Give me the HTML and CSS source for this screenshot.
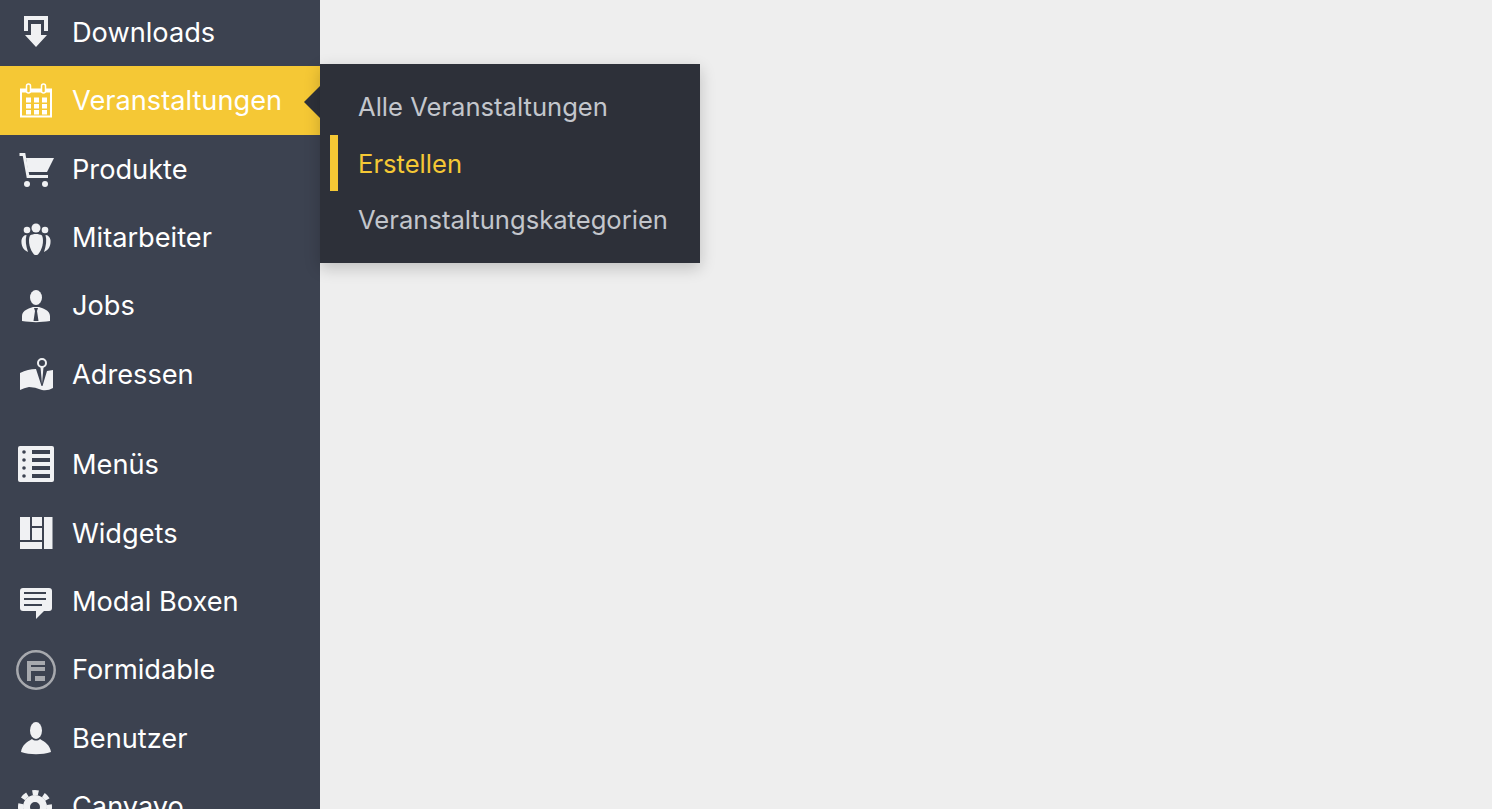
FILE: index.html
```html
<!DOCTYPE html>
<html lang="de">
<head>
    <meta charset="UTF-8">
    <title>Veranstaltungen</title>
    <link rel="stylesheet" href="styles.css">
</head>
<body>
    <ul class="sidebar">
        <li class="item">
            <svg class="icon" viewBox="0 0 36 36"><path d="M6 2h24v15h-4V6H10v11H6z"/><path d="M13 10h10v11h6L18 33 7 21h6z"/></svg>
            <span>Downloads</span>
        </li>
        <li class="item active">
            <svg class="icon" viewBox="0 0 36 36">
                <path fill-rule="evenodd" d="M2 5.500h32v29H2zM4 9.500v23h28v-23z"/>
                <rect x="8" y="14.500" width="5" height="5"/><rect x="16" y="14.500" width="5" height="5"/><rect x="24" y="14.500" width="5" height="5"/>
                <rect x="8" y="21" width="5" height="4.500"/><rect x="16" y="21" width="5" height="4.500"/><rect x="24" y="21" width="5" height="4.500"/>
                <rect x="8" y="27" width="5" height="4.500"/><rect x="16" y="27" width="5" height="4.500"/><rect x="24" y="27" width="5" height="4.500"/>
                <rect class="ring" x="8.500" y="1" width="4" height="9" rx="2"/><rect class="ring" x="23.500" y="1" width="4" height="9" rx="2"/>
            </svg>
            <span>Veranstaltungen</span>
            <div class="flyout">
                <a class="sub">Alle Veranstaltungen</a>
                <a class="sub current">Erstellen</a>
                <a class="sub">Veranstaltungskategorien</a>
            </div>
        </li>
        <li class="item">
            <svg class="icon" viewBox="0 0 36 36"><path class="line" d="M1.500 3.500H6L10 25.500H30"/><path d="M8 7h28l-7 14H10z"/><circle cx="9" cy="33" r="3"/><circle cx="27" cy="33" r="3"/></svg>
            <span>Produkte</span>
        </li>
        <li class="item">
            <svg class="icon" viewBox="0 0 36 36"><circle cx="9" cy="10" r="3.300"/><circle cx="18" cy="8" r="4.500"/><circle cx="27" cy="10" r="3.300"/><path d="M12 15.500C15 13.500 21 13.500 24 15.500C26.500 21 24 30 20 34.500Q18 35.500 16 34.500C12 30 9.500 21 12 15.500z"/><path d="M8.500 15C6 15 4 17 3.500 20C3 25 5 30 10 32C8 26 7 20 8.500 15z"/><path d="M27.500 15C30 15 32 17 32.500 20C33 25 31 30 26 32C28 26 29 20 27.500 15z"/></svg>
            <span>Mitarbeiter</span>
        </li>
        <li class="item">
            <svg class="icon" viewBox="0 0 36 36"><ellipse cx="18" cy="9.500" rx="6" ry="7.500"/><path d="M4 33V28C4 22 12 20 15 19H21C24 20 32 22 32 28V33C22 34.500 14 34.500 4 33z"/><path class="cut" d="M16 20h4l-1 3 1.500 10h-5L17 23z"/></svg>
            <span>Jobs</span>
        </li>
        <li class="item">
            <svg class="icon" viewBox="0 0 36 36"><path d="M2 17Q10 13 18 13L23.500 30h1L29 15l6-1v18Q30 35 24 34Q17 31 11 31Q6 32 2 34z"/><circle class="ring-line" cx="24" cy="7" r="4"/><path d="M22.500 11L24 28 25.500 11z"/></svg>
            <span>Adressen</span>
        </li>
        <li class="item separated">
            <svg class="icon" viewBox="0 1 36 36">
                <rect width="36" height="36" rx="2"/>
                <path class="cut" d="M14 4h18v4H14zM14 12h18v4H14zM14 20h18v4H14zM14 28h18v4H14z"/>
                <circle class="cut" cx="6" cy="6" r="1.800"/><circle class="cut" cx="6" cy="14" r="1.800"/><circle class="cut" cx="6" cy="22" r="1.800"/><circle class="cut" cx="6" cy="30" r="1.800"/>
            </svg>
            <span>Menüs</span>
        </li>
        <li class="item">
            <svg class="icon" viewBox="0 0 36 36"><rect x="2" y="2" width="10" height="23"/><rect x="14" y="2" width="10" height="9"/><rect x="14" y="13" width="10" height="12"/><rect x="2" y="27" width="22" height="7"/><rect x="26" y="2" width="8.500" height="32"/></svg>
            <span>Widgets</span>
        </li>
        <li class="item">
            <svg class="icon" viewBox="0 0 36 36"><rect x="2" y="4" width="32" height="23" rx="3"/><path d="M18 26v9l9-9z"/><path class="cut-line" d="M6 9h22M6 15h22M6 21h18"/></svg>
            <span>Modal Boxen</span>
        </li>
        <li class="item">
            <svg class="icon muted" viewBox="0 0 36 36"><circle class="ring-line" cx="18" cy="18" r="18.700"/><path d="M9 9h18v4H13v2h14v4H13v10H9z"/><path d="M17 24h10v5H17z"/></svg>
            <span>Formidable</span>
        </li>
        <li class="item">
            <svg class="icon" viewBox="0 0 36 36"><ellipse cx="18" cy="10.500" rx="6" ry="8.500"/><path d="M3 32C4 25 9 22 14 19C16 21 20 21 22 19C27 22 32 25 33 32C24 35 12 35 3 32z"/></svg>
            <span>Benutzer</span>
        </li>
        <li class="item">
            <svg class="icon" viewBox="0 0 36 36"><circle class="gear" cx="17" cy="18" r="8.500"/><circle class="teeth" cx="17" cy="18" r="14.500"/></svg>
            <span>Canvayo</span>
        </li>
    </ul>
</body>
</html>
```

FILE: styles.css
```css
body {
    margin: 0;
    height: 809px;
    overflow: hidden;
    background-color: #eeeeee;
    font-family: Inter, "Liberation Sans", sans-serif;
}
.sidebar {
    list-style: none;
    width: 320px;
    height: 830px;
    margin: -2px 0 0;
    padding: 0;
    background-color: #3c4250;
}
.item {
    position: relative;
    display: flex;
    align-items: center;
    gap: 18px;
    height: 68.4px;
    padding-left: 18px;
    font-size: 27.2px;
    color: #ffffff;
}
.separated {
    margin-top: 22px;
}
.icon {
    width: 36px;
    height: 36px;
    flex: none;
    overflow: visible;
    fill: #f0f1f3;
}
.icon .line {
    fill: none;
    stroke: #f0f1f3;
    stroke-width: 3;
}
.icon .cut {
    fill: #3c4250;
}
.icon .cut-line {
    fill: none;
    stroke: #3c4250;
    stroke-width: 2;
}
.icon .ring-line {
    fill: none;
    stroke: #f0f1f3;
    stroke-width: 2;
}
.icon.muted {
    fill: #a7a9ae;
}
.icon.muted .ring-line {
    stroke: #a7a9ae;
    stroke-width: 2.5;
}
.icon .gear {
    fill: none;
    stroke: #f0f1f3;
    stroke-width: 7;
}
.icon .teeth {
    fill: none;
    stroke: #f0f1f3;
    stroke-width: 5;
    stroke-dasharray: 6 5.39;
    stroke-dashoffset: 3;
}
.active {
    height: 68.6px;
    background-color: #f5c835;
}
.active .icon {
    fill: #ffffff;
}
.active .ring {
    stroke: #ffffff;
    stroke-width: 1.500;
    fill: #f5c835;
}
.active::after {
    content: "";
    position: absolute;
    right: 0;
    top: 20px;
    border: 16px solid transparent;
    border-left-width: 0;
    border-right-color: #2d3039;
}
.flyout {
    position: absolute;
    left: 320px;
    top: -2px;
    width: 380px;
    height: 199px;
    box-sizing: border-box;
    padding: 14.2px 0 0 10px;
    background-color: #2d3039;
    box-shadow: 0 5px 15px rgba(0, 0, 0, 0.2);
    z-index: 2;
}
.sub {
    display: flex;
    align-items: center;
    height: 56.4px;
    padding-left: 28px;
    color: #c3c6cc;
    font-size: 25.6px;
}
.current {
    padding-left: 20px;
    border-left: 8px solid #f5c835;
    color: #f5c835;
}
```
